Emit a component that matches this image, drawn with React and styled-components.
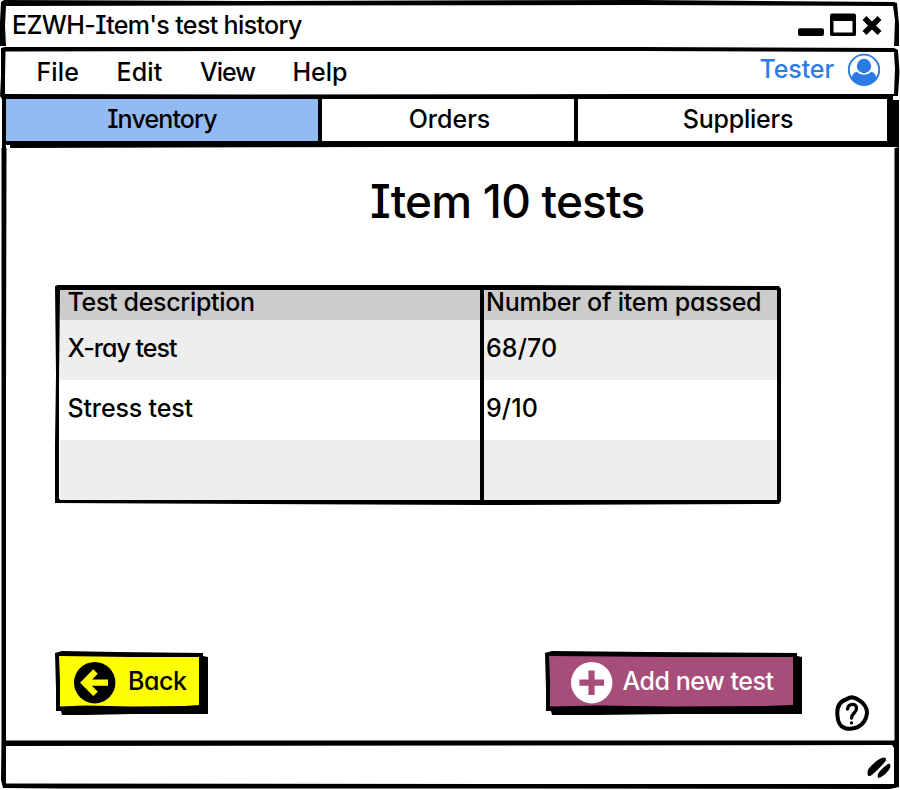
import React from 'react';
import styled, { createGlobalStyle } from 'styled-components';

const GlobalStyle = createGlobalStyle`
  * { box-sizing: border-box; }
  body { margin: 0; background: #fff; overflow: hidden; }
`;

/* A panel with hand-drawn edges: an ink silhouette with a paper shape over it. */
const Sketch = styled.div`
  position: relative;
  isolation: isolate;
  &::before,
  &::after {
    content: '';
    position: absolute;
    inset: 0;
    z-index: -1;
  }
  &::before {
    background: #000;
    clip-path: polygon(${(p) => p.$ink});
  }
  &::after {
    background: ${(p) => p.$fill || '#fff'};
    clip-path: polygon(${(p) => p.$paper});
  }
`;

const Window = styled.main`
  display: flex;
  flex-direction: column;
  width: 900px;
  height: 790px;
  background: #fff;
  color: #000;
  font: 450 25px/30px Inter, 'Noto Sans', sans-serif;
  font-feature-settings: 'cv08', 'cv11';
`;

const Text = styled.span`
  letter-spacing: ${(p) => p.$track || 0}px;
  white-space: nowrap;
`;

const TitleBar = styled(Sketch)`
  display: flex;
  justify-content: space-between;
  height: 47px;
  padding: 10px 18px 0 12px;
`;

const WindowButtons = styled.svg`
  width: 86px;
  height: 26px;
  margin-top: 2px;
`;

const MenuBar = styled(Sketch)`
  display: flex;
  justify-content: space-between;
  height: 49px;
  padding: 10px 19px 0 36.5px;
`;

const Menu = styled.nav`
  display: grid;
  grid-template-columns: 80px 83.5px 92.5px 60px;
`;

const User = styled.div`
  display: flex;
  gap: 13px;
  color: #2c7be5;
`;

const UserName = styled(Text)`
  margin-top: -3px;
`;

const UserIcon = styled.svg`
  width: 34px;
  height: 34px;
  margin-top: -5px;
`;

const TabBar = styled(Sketch)`
  display: grid;
  grid-template-columns: 312px 4px 252px 4px 309px;
  height: 52px;
  padding: 3px 0 0 6px;
`;

const Tab = styled.div`
  display: flex;
  justify-content: center;
  height: 42px;
  padding: 5px 0 0 ${(p) => p.$shift || 0}px;
  background: ${(p) => (p.$active ? '#94baf2' : '#fff')};
`;

const Rule = styled.div`
  height: 44px;
  background: #000;
`;

const Body = styled(Sketch)`
  flex: 1;
  display: flex;
  flex-direction: column;
  padding: 27px 28px 0 55px;
`;

const Heading = styled.h1`
  margin: 0 0 0 315px;
  height: 110px;
  font-size: 46px;
  line-height: 52px;
  font-weight: 450;
`;

const Table = styled(Sketch)`
  width: 727px;
  height: 220px;
  padding: 5px;
  display: grid;
  grid-template-columns: 420px 4px 1fr;
`;

const Column = styled.div`
  display: grid;
  grid-template-rows: 30px 60px 60px 60px;
`;

const Cell = styled.div`
  padding: ${(p) => p.$top}px 0 0 ${(p) => p.$left}px;
  background: ${(p) => p.$tone};
`;

const HeaderCell = styled(Cell)`
  line-height: 25px;
`;

const Divider = styled.div`
  margin: -5px 0;
  background: #000;
`;

const Actions = styled.div`
  display: flex;
  margin-top: 146px;
`;

const Button = styled(Sketch)`
  display: flex;
  width: ${(p) => p.$width}px;
  height: 64px;
  padding: 10px 0 0 ${(p) => p.$inset}px;
  gap: ${(p) => p.$gap}px;
  color: ${(p) => p.$color || '#000'};
`;

const AddButton = styled(Button)`
  margin-left: 337px;
`;

const ButtonIcon = styled.svg`
  width: 42px;
  height: 42px;
  margin-top: 1px;
`;

const ButtonText = styled(Text)`
  margin-top: 5px;
`;

const HelpIcon = styled.svg`
  width: 36px;
  height: 38px;
  margin: 43px 0 0 32px;
`;

const StatusBar = styled(Sketch)`
  display: flex;
  justify-content: flex-end;
  height: 50px;
  padding: 16px 8px 0 0;
`;

const Grip = styled.svg`
  width: 28px;
  height: 24px;
`;

const columns = [
  { label: 'Test description', track: -0.32, pad: 7.5, rows: [['X-ray test', -0.98], ['Stress test', -0.15], null] },
  { label: 'Number of item passed', track: -0.22, pad: 2, rows: [['68/70', 0.1], ['9/10', 0.1], null] },
];
const tones = ['#eee', '#fff', '#eee'];

const TableColumn = ({ label, track, pad, rows }) => (
  <Column>
    <HeaderCell $tone="#ccc" $top={0} $left={pad}>
      <Text $track={track}>{label}</Text>
    </HeaderCell>
    {rows.map((row, i) => (
      <Cell key={i} $tone={tones[i]} $top={13} $left={pad}>
        {row && <Text $track={row[1]}>{row[0]}</Text>}
      </Cell>
    ))}
  </Column>
);

const buttonInk =
  '0 2px, 7px 0, 40% 1px, calc(100% - 5px) 2px, calc(100% - 5px) 5px, 100% 6px, 100% calc(100% - 1px), 50% calc(100% - 1px), 20% 100%, 7px 100%, 6px calc(100% - 4px), 1px calc(100% - 4px), 1px 60%';
const buttonPaper =
  '4px 5px, 50% 6px, calc(100% - 9px) 6px, calc(100% - 9px) 54px, 85% 55px, 50% 55.5px, 20% 54.5px, 5px 55.5px, 5px 30px';

export default function App() {
  return (
    <>
      <GlobalStyle />
      <Window>
        <TitleBar
          $ink="1px 2px, 4px 0, 250px 1px, 640px 0, 894px 2px, 897px 3px, 899px 24px, 899px 46px, 894px 46px, 6px 46px, 0 46px, 0 22px"
          $paper="6px 6px, 250px 5.500px, 640px 5px, 893px 6px, 895px 20px, 894px 47px, 6px 47px, 5px 25px"
        >
          <Text $track={-0.64}>EZWH-Item's test history</Text>
          <WindowButtons viewBox="0 0 86 26">
            <rect x="2" y="16.300" width="26" height="7.700" rx="2" />
            <path fillRule="evenodd" d="M34 3.500q0-2 2-2h22q2 0 2 2v19q0 1.500-2 1.500H36q-2 0-2-1.500zM37.500 9v11.500h19V9z" />
            <path d="M70.500 8l11 11M81.500 8l-11 11" stroke="#000" strokeWidth="5.600" strokeLinecap="square" />
          </WindowButtons>
        </TitleBar>
        <MenuBar
          $ink="1px 1px, 5px 0, 250px 0, 640px 0, 894px 1px, 898px 3px, 899.500px 25px, 898px 49px, 0 50px, 1px 30px"
          $paper="5.500px 4.500px, 250px 4px, 640px 4px, 894px 5px, 895px 22px, 894px 47px, 640px 47px, 250px 47.500px, 5px 47px, 5px 30px"
        >
          <Menu>
            <Text $track={0.1}>File</Text>
            <Text $track={0.1}>Edit</Text>
            <Text $track={-1}>View</Text>
            <Text $track={0}>Help</Text>
          </Menu>
          <User>
            <UserName $track={-0.1}>Tester</UserName>
            <UserIcon viewBox="0 0 34 34">
              <circle cx="17" cy="18.300" r="15.200" fill="none" stroke="currentColor" strokeWidth="1.900" transform="translate(0 -.5)" />
              <circle cx="17" cy="14" r="7.200" fill="currentColor" />
              <path fill="currentColor" d="M4.500 26.500C5 22.500 7.500 19.500 10 20Q13 22.800 17 22.800T24 20C26.500 19.500 29 22.500 29.500 26.500Q25 33 17 33T4.500 26.500z" />
            </UserIcon>
          </User>
        </MenuBar>
        <TabBar
          $ink="0 0, 893px 0, 893px 4px, 899px 4px, 899px 100%, 895px 51px, 400px 51px, 10px 52px, 10px 49px, 6px 49px, 6px 100%, 2px 100%, 2px 3px"
          $paper="6px 3px, 887px 3px, 887px 44px, 6px 45px"
        >
          <Tab $active $shift={0}><Text $track={-0.85}>Inventory</Text></Tab>
          <Rule />
          <Tab $shift={3}><Text $track={0}>Orders</Text></Tab>
          <Rule />
          <Tab $shift={11}><Text $track={-0.25}>Suppliers</Text></Tab>
        </TabBar>
        <Body
          $ink="1.500px 0, 899px 0, 899px 100%, 1.500px 100%"
          $paper="6.500px 0, 894.500px 0, 894.500px 300px, 894.500px 100%, 6px 100%, 6px 250px"
        >
          <Heading><Text $track={-0.8}>Item 10 tests</Text></Heading>
          <Table
            $ink="0 1px, 3px 0, 426px 0, 724px 1px, 726px 4px, 726px 216px, 724px 219px, 426px 220px, 200px 219px, 0 218px, 0 160px, 1px 90px"
            $paper="5px 5px, 420px 5px, 722px 5px, 722px 100px, 721px 215px, 4px 214px, 4px 100px"
          >
            <TableColumn {...columns[0]} />
            <Divider />
            <TableColumn {...columns[1]} />
          </Table>
          <Actions>
            <Button $width={153} $inset={19} $gap={12} $fill="#ff0" $ink={buttonInk} $paper={buttonPaper}>
              <ButtonIcon viewBox="0 0 42 42">
                <circle cx="20.700" cy="20.700" r="20.700" />
                <path d="M21.500 9.500L10.500 20.700l11 11.200M11 20.700h23" fill="none" stroke="#ff0" strokeWidth="6.300" />
              </ButtonIcon>
              <ButtonText $track={-0.4}>Back</ButtonText>
            </Button>
            <AddButton $width={257} $inset={26} $gap={9.5} $color="#fff" $fill="#a64e79" $ink={buttonInk} $paper={buttonPaper}>
              <ButtonIcon viewBox="0 0 42 42">
                <circle cx="20.700" cy="20.700" r="20.700" fill="#fff" />
                <path d="M20.500 11.500v18.500M11.500 20.700h18.500" stroke="#a64e79" strokeWidth="6.200" strokeLinecap="square" />
              </ButtonIcon>
              <ButtonText $track={-0.48}>Add new test</ButtonText>
            </AddButton>
            <HelpIcon viewBox="0 0 36 38" fill="none" stroke="#000" strokeLinecap="round">
              <path d="M13 5Q18 1.500 24 5.500C30 9 33 13 33 19C32 28 26 34 18 34.500C9 36 4 31 3.500 22C2.500 13 6 7 13 5z" strokeWidth="4" />
              <path d="M13.500 15C14.500 9 23 9 22.500 14.500C22.500 19 17.500 19 17.500 24M17.500 28.800v.1" strokeWidth="3.300" />
            </HelpIcon>
          </Actions>
        </Body>
        <StatusBar
          $ink="1.500px 0, 6px 0, 6px .5px, 894px .5px, 894px 0, 899px 0, 899px 47px, 890px 49px, 500px 48.500px, 60px 48.500px, 3px 48px, 1px 40px"
          $paper="6px 6px, 892px 5px, 894px 8px, 894px 44px, 500px 44px, 6px 43.500px"
        >
          <Grip viewBox="0 0 28 24">
            <path d="M4 19.500Q2 14 8 9Q15 2 20.500 1.500Q24 3 20 7Q13 15 7 19.500Q5 20.500 4 19.500z" />
            <path d="M14 22Q12.500 18 17 14Q22 8.500 25.500 7.500Q28 10 24 15Q19 21 14 22z" />
          </Grip>
        </StatusBar>
      </Window>
    </>
  );
}
